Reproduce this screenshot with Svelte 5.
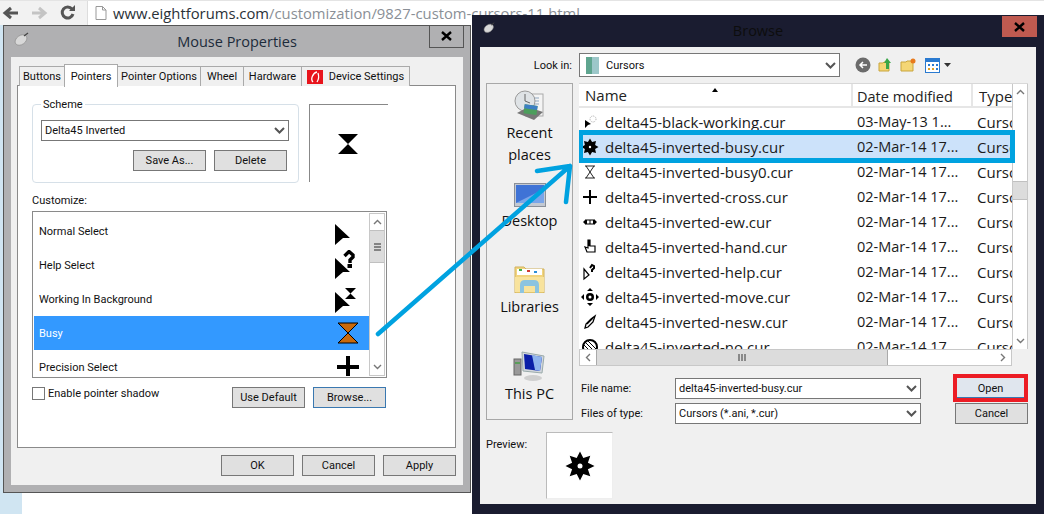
<script>
  const tabs = ['Buttons', 'Pointers', 'Pointer Options', 'Wheel', 'Hardware'];

  const pointers = [
    { name: 'Normal Select', icon: 'normal' },
    { name: 'Help Select', icon: 'help' },
    { name: 'Working In Background', icon: 'working' },
    { name: 'Busy', icon: 'busy', selected: true },
    { name: 'Precision Select', icon: 'cross' }
  ];

  const files = [
    { name: 'delta45-black-working.cur', date: '03-May-13 1...', icon: 'working' },
    { name: 'delta45-inverted-busy.cur', date: '02-Mar-14 17...', icon: 'gear', selected: true },
    { name: 'delta45-inverted-busy0.cur', date: '02-Mar-14 17...', icon: 'glass' },
    { name: 'delta45-inverted-cross.cur', date: '02-Mar-14 17...', icon: 'cross' },
    { name: 'delta45-inverted-ew.cur', date: '02-Mar-14 17...', icon: 'ew' },
    { name: 'delta45-inverted-hand.cur', date: '02-Mar-14 17...', icon: 'hand' },
    { name: 'delta45-inverted-help.cur', date: '02-Mar-14 17...', icon: 'help' },
    { name: 'delta45-inverted-move.cur', date: '02-Mar-14 17...', icon: 'move' },
    { name: 'delta45-inverted-nesw.cur', date: '02-Mar-14 17...', icon: 'nesw' },
    { name: 'delta45-inverted-no.cur', date: '02-Mar-14 17...', icon: 'no' }
  ];

  // spiky busy cursor, used in the file row and in the preview
  function gearPoints(cx, cy, outer, inner, spikes) {
    const pts = [];
    for (let i = 0; i < spikes * 2; i++) {
      const r = i % 2 ? inner : outer;
      const a = (Math.PI * i) / spikes - Math.PI / 2;
      pts.push((cx + r * Math.cos(a)).toFixed(1) + ',' + (cy + r * Math.sin(a)).toFixed(1));
    }
    return pts.join(' ');
  }
</script>

{#snippet chevron()}
  <svg class="chev" width="11" height="9" viewBox="0 0 11 9"><path d="M1 2l4.500 4.500L10 2" fill="none" stroke="#555" stroke-width="2" /></svg>
{/snippet}

{#snippet mouseIcon(w, h)}
  <svg width={w} height={h} viewBox="0 0 16 14">
    <ellipse cx="7" cy="8" rx="6.500" ry="4.500" transform="rotate(-35 7 8)" fill="#d8d8d8" stroke="#888" stroke-width=".6" />
    <path d="M10 4l4-3" stroke="#444" stroke-width="1.200" />
  </svg>
{/snippet}

{#snippet bigCursor(kind)}
  {#if kind === 'normal'}
    <svg width="24" height="30" viewBox="0 0 24 30"><polygon points="0,8 15,22 8,22 0,29" /></svg>
  {:else if kind === 'help'}
    <svg width="24" height="30" viewBox="0 0 24 30">
      <polygon points="0,8 15,22 8,22 0,29" />
      <path d="M9.500 6L14 1.500 18 5v2l-3 3v3" fill="none" stroke="#000" stroke-width="3.400" />
      <rect x="12.500" y="14" width="4.500" height="4" />
    </svg>
  {:else if kind === 'working'}
    <svg width="24" height="30" viewBox="0 0 24 30">
      <polygon points="0,8 15,22 8,22 0,29" />
      <polygon points="10,4 21,4 15.500,9.500 21,15 10,15 15.500,9.500" />
    </svg>
  {:else if kind === 'busy'}
    <svg width="24" height="24" viewBox="0 0 24 24"><polygon points="3,2 23,2 13,12 23,22 3,22 13,12" fill="#c8690c" stroke="#000" stroke-width="1" /></svg>
  {:else}
    <svg width="24" height="24" viewBox="0 0 24 24"><path d="M13 1v21M2 12h22" stroke="#000" stroke-width="4" fill="none" /></svg>
  {/if}
{/snippet}

{#snippet fileIcon(kind)}
  <svg class="ficon" width="18" height="18" viewBox="0 0 18 18">
    {#if kind === 'working'}
      <polygon points="4,7 10,11 7,12 4,15" />
      <circle cx="12" cy="6" r="3" fill="none" stroke="#aaa" stroke-width="1" stroke-dasharray="1 1" />
    {:else if kind === 'gear'}
      <polygon points={gearPoints(9, 9, 8.500, 5.500, 8)} />
      <circle cx="9" cy="9" r="1.200" fill="#fff" />
    {:else if kind === 'glass'}
      <path d="M4 3h10M4 15h10M5 3l8 12M13 3L5 15" fill="none" stroke="#222" stroke-width="1" />
    {:else if kind === 'cross'}
      <path d="M9 2v14M2 9h14" stroke="#000" stroke-width="2" />
    {:else if kind === 'ew'}
      <path d="M2 9l3-3v6zM16 9l-3-3v6z" />
      <rect x="5.500" y="7" width="7" height="4" fill="#fff" stroke="#000" />
      <path d="M9 7v4" stroke="#000" />
    {:else if kind === 'hand'}
      <path d="M7 2h2v6h5v6H6l-2-5 3 1z" fill="#fff" stroke="#000" stroke-width="1.200" />
      <rect x="7" y="2" width="2" height="6" />
    {:else if kind === 'help'}
      <path d="M3 6v10l5-4z" fill="#fff" stroke="#000" stroke-width="1.200" />
      <path d="M9 5l2-3 2 1v2l-2 2v2" fill="none" stroke="#000" stroke-width="2" />
    {:else if kind === 'move'}
      <path d="M9 0l3 3H6zM9 18l3-3H6zM0 9l3-3v6zM18 9l-3-3v6z" />
      <circle cx="9" cy="9" r="4" />
      <circle cx="9" cy="9" r="1.500" fill="#fff" />
    {:else if kind === 'nesw'}
      <path d="M14 3l-2 6-5 5-3 1 1-4 5-5z" fill="#fff" stroke="#000" stroke-width="1.300" />
      <path d="M6 11l6-6" stroke="#000" stroke-width="1.300" />
    {:else}
      <circle cx="9" cy="9" r="7" fill="#fff" stroke="#000" stroke-width="2" />
      <path d="M4 4l10 10M7 3l8 8M3 7l8 8" stroke="#000" />
    {/if}
  </svg>
{/snippet}

<div class="desktop">
  <div class="strip"></div>

  <header class="toolbar">
    <svg width="18" height="14" viewBox="0 0 18 14" class="nav"><path d="M16 7H4M9 2L3 7l6 5" fill="none" stroke="#555" stroke-width="3" /></svg>
    <svg width="18" height="14" viewBox="0 0 18 14" class="nav"><path d="M1 7h12M8 2l6 5-6 5" fill="none" stroke="#c4c4c4" stroke-width="3" /></svg>
    <svg width="16" height="16" viewBox="0 0 16 16" class="nav"><path d="M13 9a5.500 5.500 0 1 1-1-5" fill="none" stroke="#555" stroke-width="3" /><path d="M9 6h6V0z" fill="#555" /></svg>
    <div class="address">
      <svg width="12" height="14" viewBox="0 0 12 14"><path d="M1 .5h6.500L11 4v9.500H1z" fill="#fff" stroke="#999" /><path d="M7.500 .5V4H11" fill="none" stroke="#999" /></svg>
      <span class="url"><b>www.eightforums.com</b>/customization/9827-custom-cursors-11.html</span>
    </div>
  </header>

  <section class="window mouse">
    <div class="titlebar">
      <span class="appicon">{@render mouseIcon(16, 14)}</span>
      <span class="title">Mouse Properties</span>
      <span class="close">
        <svg width="11" height="10" viewBox="0 0 11 10"><path d="M1 1l9 8M10 1l-9 8" stroke="#000" stroke-width="2.400" /></svg>
      </span>
    </div>
    <div class="content">
      <nav class="tabs">
        {#each tabs as t}
          <span class="tab" class:active={t === 'Pointers'}>{t}</span>
        {/each}
        <span class="tab device">
          <svg width="16" height="14" viewBox="0 0 16 14"><rect width="16" height="14" fill="#e8141c" /><path d="M6 12C3 9 6 3 10 2M10 12c2-3 2-6 1-9" fill="none" stroke="#fff" stroke-width="1.300" /></svg>
          Device Settings
        </span>
      </nav>
      <div class="panel">
        <div class="top">
          <fieldset class="scheme">
            <legend>Scheme</legend>
            <div class="select">Delta45 Inverted {@render chevron()}</div>
            <div class="scheme-btns">
              <button>Save As...</button>
              <button>Delete</button>
            </div>
          </fieldset>
          <div class="sample">
            <svg width="20" height="20" viewBox="0 0 20 20"><polygon points="0,0 20,0 10,10 20,20 0,20 10,10" /></svg>
          </div>
        </div>
        <div class="customize">Customize:</div>
        <div class="pointer-list">
          <div class="pointer-rows">
            {#each pointers as p}
              <div class="pointer" class:selected={p.selected}>
                <span>{p.name}</span>
                <span class="cursor">{@render bigCursor(p.icon)}</span>
              </div>
            {/each}
          </div>
          <div class="vbar">
            <span class="arrow"><svg width="9" height="6" viewBox="0 0 9 6"><path d="M1 5l3.500-3.500L8 5" fill="none" stroke="#777" stroke-width="1.400" /></svg></span>
            <span class="thumb"><svg width="7" height="8" viewBox="0 0 7 8"><path d="M0 1h7M0 4h7M0 7h7" stroke="#666" stroke-width="1.400" /></svg></span>
            <span class="track"></span>
            <span class="arrow"><svg width="9" height="6" viewBox="0 0 9 6"><path d="M1 1l3.500 3.500L8 1" fill="none" stroke="#777" stroke-width="1.400" /></svg></span>
          </div>
        </div>
        <div class="pointer-foot">
          <label class="shadow"><span class="check"></span>Enable pointer shadow</label>
          <div class="foot-btns">
            <button>Use Default</button>
            <button class="focus">Browse...</button>
          </div>
        </div>
      </div>
      <div class="dialog-btns">
        <button>OK</button>
        <button>Cancel</button>
        <button>Apply</button>
      </div>
    </div>
  </section>

  <section class="window browse">
    <div class="titlebar">
      <span class="appicon">{@render mouseIcon(13, 11)}</span>
      <span class="title">Browse</span>
      <span class="close red">
        <svg width="11" height="10" viewBox="0 0 11 10"><path d="M1 1l9 8M10 1l-9 8" stroke="#000" stroke-width="2.400" /></svg>
      </span>
    </div>
    <div class="content">
      <div class="lookin">
        <span class="lookin-label">Look in:</span>
        <div class="select wide">
          <svg width="13" height="17" viewBox="0 0 13 17"><rect width="6" height="17" fill="#5fa58f" /><rect x="6" width="7" height="17" fill="#9cc7c9" /></svg>
          <span class="grow">Cursors</span>
          {@render chevron()}
        </div>
        <div class="tools">
          <svg width="16" height="16" viewBox="0 0 16 16"><circle cx="8" cy="8" r="7.500" fill="#6b6b6b" /><path d="M12 8H5M8 5L5 8l3 3" fill="none" stroke="#fff" stroke-width="1.500" /></svg>
          <svg width="15" height="16" viewBox="0 0 15 16"><path d="M1 6h4l1-1h5v9H1z" fill="#f4d675" stroke="#c9a53c" /><path d="M9 1l4 5h-2v6H8V6H6z" fill="#3aa648" /></svg>
          <svg width="16" height="14" viewBox="0 0 16 14"><path d="M1 4h5l1-1h6v10H1z" fill="#f4d675" stroke="#c9a53c" /><circle cx="13" cy="3" r="2.500" fill="#e87a1d" /></svg>
          <span class="views">
            <svg width="15" height="15" viewBox="0 0 15 15"><rect x=".5" y=".5" width="14" height="14" fill="#fff" stroke="#2a7ad0" /><rect x="1" y="1" width="13" height="3" fill="#2a7ad0" /><path d="M3 6h2v2H3zM7 6h2v2H7zM11 6h2v2h-2z" fill="#2a7ad0" /><path d="M3 10h2v2H3zM7 10h2v2H7z" fill="#e2a020" /><path d="M11 10h2v2h-2z" fill="#2a7ad0" /></svg>
            <svg width="7" height="4" viewBox="0 0 7 4"><path d="M0 0h7L3.500 4z" fill="#333" /></svg>
          </span>
        </div>
      </div>

      <div class="main">
        <aside class="places">
          <div class="place recent">
            <svg width="32" height="32" viewBox="0 0 32 32">
              <rect x="12" y="4" width="17" height="22" fill="#f4f4f4" stroke="#aaa" />
              <path d="M15 8h10M15 11h10M15 14h10" stroke="#8fa7c0" />
              <circle cx="11" cy="11" r="10" fill="#dfe3e6" stroke="#9a9a9a" />
              <path d="M11 4v7l5 2" fill="none" stroke="#666" />
              <path d="M3 23l11-6 15 5-9 8z" fill="#777" />
              <rect x="10" y="15" width="13" height="9" fill="#4c9e5c" transform="rotate(8 16 20)" />
              <rect x="10" y="15" width="13" height="4" fill="#3c7fc4" transform="rotate(8 16 20)" />
            </svg>
            <span>Recent<br />places</span>
          </div>
          <div class="place desktop-place">
            <svg width="32" height="24" viewBox="0 0 32 24">
              <rect x=".5" y=".5" width="31" height="23" fill="#c3c9d2" stroke="#8a8f98" />
              <rect x="2" y="2" width="28" height="18" fill="#3f73d6" />
              <path d="M2 20L30 6v14z" fill="#7aa5e8" />
            </svg>
            <span>Desktop</span>
          </div>
          <div class="place libraries">
            <svg width="31" height="28" viewBox="0 0 31 28">
              <path d="M1 4V2h9l2 2h18v24H1z" fill="#f2d57f" stroke="#d1b25e" />
              <rect x="3" y="4" width="25" height="6" fill="#fff" />
              <rect x="5" y="4" width="3" height="2" fill="#3fae4a" />
              <rect x="13" y="5" width="3" height="2" fill="#d03a30" />
              <rect x="20" y="6" width="3" height="2" fill="#2c8fd8" />
              <path d="M1 12h29v15H1z" fill="#f8e39d" />
              <path d="M6 28v-8q0-5 5-5h9q5 0 5 5v8h-4v-7H10v7z" fill="#8cc4e0" />
            </svg>
            <span>Libraries</span>
          </div>
          <div class="place pc">
            <svg width="32" height="32" viewBox="0 0 32 32">
              <path d="M9 2l22 4-2 17-19-2z" fill="#d4d8dd" stroke="#9aa" />
              <path d="M11 4l18 3-2 14-15-2z" fill="#0b1fa8" />
              <path d="M19 5l10 2-2 14-5-1z" fill="#8fb4ee" />
              <rect x="1" y="9" width="7" height="16" fill="#999" stroke="#666" />
              <rect x="2" y="12" width="5" height="2" fill="#5a9e5a" />
              <ellipse cx="20" cy="28" rx="9" ry="3" fill="#cfcfcf" />
            </svg>
            <span>This PC</span>
          </div>
        </aside>

        <div class="right">
          <div class="listbox">
            <div class="listing">
              <div class="head">
                <span class="sort"></span>
                <span class="col-name">Name</span>
                <span class="col-date">Date modified</span>
                <span class="col-type">Type</span>
              </div>
              {#each files as f}
                <div class="file" class:selected={f.selected}>
                  <span class="col-name">{@render fileIcon(f.icon)}{f.name}</span>
                  <span class="col-date">{f.date}</span>
                  <span class="col-type">Cursor</span>
                </div>
              {/each}
            </div>
            <div class="vbar big">
              <span class="arrow"><svg width="9" height="6" viewBox="0 0 9 6"><path d="M1 5l3.500-3.500L8 5" fill="none" stroke="#777" stroke-width="1.400" /></svg></span>
              <span class="lead"></span>
              <span class="thumb"></span>
              <span class="track"></span>
              <span class="arrow"><svg width="9" height="6" viewBox="0 0 9 6"><path d="M1 1l3.500 3.500L8 1" fill="none" stroke="#777" stroke-width="1.400" /></svg></span>
            </div>
          </div>
          <div class="hbar">
            <span class="harrow"><svg width="6" height="9" viewBox="0 0 6 9"><path d="M5 1L1.500 4.500 5 8" fill="none" stroke="#777" stroke-width="1.400" /></svg></span>
            <span class="hthumb"><svg width="8" height="7" viewBox="0 0 8 7"><path d="M1 0v7M4 0v7M7 0v7" stroke="#666" stroke-width="1.400" /></svg></span>
            <span class="htrack"></span>
            <span class="harrow"><svg width="6" height="9" viewBox="0 0 6 9"><path d="M1 1l3.500 3.500L1 8" fill="none" stroke="#777" stroke-width="1.400" /></svg></span>
          </div>
          <div class="form">
            <span class="flabel">File name:</span>
            <div class="select field">delta45-inverted-busy.cur {@render chevron()}</div>
            <button class="open">Open</button>
            <span class="flabel">Files of type:</span>
            <div class="select field">Cursors (*.ani, *.cur) {@render chevron()}</div>
            <button class="cancel">Cancel</button>
          </div>
        </div>
      </div>

      <div class="preview">
        <span class="preview-label">Preview:</span>
        <div class="preview-box">
          <svg width="30" height="30" viewBox="0 0 30 30">
            <polygon points={gearPoints(15, 15, 14.500, 8.500, 8)} />
            <circle cx="15" cy="15" r="2.500" fill="#fff" />
          </svg>
        </div>
      </div>
    </div>
  </section>

  <!-- annotations drawn on top of the screenshot -->
  <div class="mark-row"></div>
  <svg class="marker" width="1044" height="514" viewBox="0 0 1044 514">
    <path d="M378 334L570 166M537 171L570 166L566 202" fill="none" stroke="#00a2e0" stroke-width="4.500" stroke-linecap="round" stroke-linejoin="round" />
  </svg>
</div>

<style>
  :global(body) {
    margin: 0;
    background: #fff;
  }

  * {
    box-sizing: border-box;
  }

  .desktop {
    position: relative;
    width: 1044px;
    height: 514px;
    overflow: hidden;
    background: #fff;
    font-family: Roboto, "Noto Sans", sans-serif;
    font-size: 11px;
    color: #111;
  }

  .strip {
    position: absolute;
    left: 0;
    top: 25px;
    width: 22px;
    height: 489px;
    background: #d0e5f2;
  }

  .toolbar {
    display: flex;
    align-items: center;
    height: 25px;
    padding-left: 2px;
    background: #f2f2f2;
    border-top: 1px solid #e4e4e4;
  }

  .nav {
    margin-right: 11px;
    flex: none;
  }

  .address {
    display: flex;
    align-items: center;
    gap: 6px;
    padding-left: 7px;
    flex: 1;
    height: 24px;
    background: #fff;
    border-left: 1px solid #ddd;
    white-space: nowrap;
  }

  .url {
    font-family: "Open Sans", sans-serif;
    font-size: 14.8px;
    color: #8a8f96;
  }

  .url b {
    font-weight: 400;
    color: #2a3138;
  }

  .window {
    position: absolute;
    display: flex;
    flex-direction: column;
    border: 1px solid #555;
  }

  .mouse {
    left: 3px;
    top: 25px;
    width: 468px;
    height: 468px;
    padding: 0 7px 7px;
    background: #b0b0b2;
  }

  .browse {
    left: 472px;
    top: 15px;
    width: 572px;
    height: 499px;
    padding: 0 7px 9px;
    background: #1a1c30;
    border-color: #1a1c30;
  }

  .titlebar {
    display: flex;
    align-items: center;
    justify-content: center;
    position: relative;
    height: 31px;
    flex: none;
  }

  .title {
    font-family: "Open Sans", sans-serif;
    font-size: 14.5px;
    color: #1c2b3a;
  }

  .browse .title {
    color: #0d0d0d;
    margin-top: -2px;
  }

  .appicon {
    position: absolute;
    left: 3px;
    top: 6px;
  }

  .close {
    position: absolute;
    right: -1px;
    top: -1px;
    width: 35px;
    height: 23px;
    display: flex;
    align-items: center;
    justify-content: center;
    border: 1px solid #555;
    border-top: 0;
  }

  .close.red {
    top: 0;
    height: 21px;
    background: #bf5a50;
    border: 0;
  }

  .content {
    flex: 1;
    background: #f0f0f0;
  }

  .mouse .content {
    padding: 7px 6px 0;
  }

  .tabs {
    display: flex;
    align-items: flex-end;
    margin-left: 2px;
    height: 21px;
    position: relative;
    top: 1px;
  }

  .tab {
    display: flex;
    align-items: center;
    justify-content: center;
    gap: 6px;
    width: 46px;
    height: 20px;
    background: #f0f0f0;
    border: 1px solid #aaa;
    border-bottom: 0;
    border-left: 0;
    line-height: 1;
  }

  .tab:first-child {
    border-left: 1px solid #aaa;
  }

  .tab.active {
    position: relative;
    z-index: 1;
    width: 54px;
    height: 23px;
    margin-bottom: -1px;
    margin-left: -1px;
    background: #fff;
    border-left: 1px solid #aaa;
  }

  .tab:nth-child(3) {
    width: 83px;
  }

  .tab:nth-child(4) {
    width: 43px;
  }

  .tab:nth-child(5) {
    width: 58px;
  }

  .tab.device {
    width: 108px;
  }

  .panel {
    width: 439px;
    height: 363px;
    padding: 0 14px;
    background: #fff;
    border: 1px solid #8a8a8a;
  }

  .top {
    display: flex;
    align-items: flex-start;
    padding-top: 11px;
  }

  .scheme {
    width: 266px;
    height: 86px;
    margin: 0;
    padding: 0 9px;
    border: 1px solid #d6e0e8;
    border-radius: 4px;
  }

  legend {
    padding: 0 2px;
    margin-left: -1px;
    line-height: 15px;
  }

  .select {
    display: flex;
    align-items: center;
    justify-content: space-between;
    height: 21px;
    padding: 0 3px;
    background: #fff;
    border: 1px solid #777;
    white-space: nowrap;
  }

  .scheme .select {
    width: 248px;
    margin-top: 8px;
    margin-left: -1px;
  }

  .chev {
    flex: none;
  }

  .scheme-btns {
    display: flex;
    justify-content: flex-end;
    gap: 8px;
    margin-top: 9px;
    margin-right: 2px;
  }

  button {
    width: 73px;
    height: 21px;
    padding: 0;
    background: #e0e0e0;
    border: 1px solid #777;
    border-radius: 0;
    font: inherit;
    color: inherit;
  }

  .sample {
    display: flex;
    align-items: center;
    justify-content: center;
    width: 79px;
    height: 78px;
    margin: 7px 0 0 10px;
    padding-right: 2px;
    background: #fff;
    border-top: 1px solid #888;
    border-left: 1px solid #888;
  }

  .customize {
    margin-top: 10px;
    line-height: 15px;
    height: 18px;
  }

  .pointer-list {
    display: flex;
    width: 355px;
    height: 167px;
    padding: 1px;
    border: 1px solid #8a8a8a;
  }

  .pointer-rows {
    flex: 1;
    overflow: hidden;
  }

  .pointer {
    display: flex;
    align-items: center;
    justify-content: space-between;
    height: 34px;
    padding-left: 5px;
  }

  .pointer:first-child {
    margin-top: 1px;
  }

  .pointer.selected {
    background: #3399ff;
    color: #fff;
  }

  .cursor {
    display: flex;
    margin-right: 10px;
    width: 24px;
    justify-content: center;
  }

  .vbar {
    display: flex;
    flex-direction: column;
    width: 16px;
    flex: none;
    border: 1px solid #c8c8c8;
    background: #fff;
  }

  .arrow {
    display: flex;
    align-items: center;
    justify-content: center;
    height: 16px;
    flex: none;
  }

  .thumb {
    display: flex;
    align-items: center;
    justify-content: center;
    height: 33px;
    flex: none;
    background: #dcdcdc;
    border-top: 1px solid #c0c0c0;
    border-bottom: 1px solid #c0c0c0;
  }

  .track {
    flex: 1;
  }

  .pointer-foot {
    display: flex;
    justify-content: space-between;
    width: 354px;
    margin-top: 9px;
  }

  .shadow {
    display: flex;
    align-items: center;
    gap: 3px;
    height: 13px;
  }

  .check {
    width: 13px;
    height: 13px;
    background: #fff;
    border: 1px solid #777;
  }

  .foot-btns {
    display: flex;
    gap: 8px;
  }

  .focus {
    border-color: #3a78b0;
  }

  .dialog-btns {
    display: flex;
    justify-content: flex-end;
    gap: 8px;
    width: 439px;
    margin-top: 7px;
  }

  .browse .content {
    padding: 6px 8px 0 6px;
  }

  .lookin {
    display: flex;
    align-items: center;
    height: 24px;
  }

  .lookin-label {
    width: 87px;
    padding-right: 1px;
    text-align: right;
  }

  .select.wide {
    justify-content: flex-start;
    gap: 7px;
    width: 261px;
    height: 24px;
    margin-left: 6px;
    padding-left: 6px;
  }

  .grow {
    flex: 1;
  }

  .tools {
    display: flex;
    align-items: center;
    gap: 7px;
    margin-left: 15px;
  }

  .views {
    display: flex;
    align-items: center;
    gap: 4px;
    margin-left: 2px;
  }

  .main {
    display: flex;
    gap: 6px;
    margin-top: 6px;
    height: 337px;
  }

  .places {
    display: flex;
    flex-direction: column;
    align-items: center;
    width: 87px;
    padding-top: 6px;
    border: 1px solid #a8a8a8;
    font-family: "Open Sans", sans-serif;
    font-size: 14.5px;
    line-height: 22px;
    text-align: center;
  }

  .place svg {
    display: block;
    margin: 0 auto 1px;
  }

  .place {
    flex: none;
  }

  .recent svg {
    margin-bottom: 0;
  }

  .desktop-place {
    margin-top: 17px;
  }

  .desktop-place svg,
  .libraries svg {
    margin-bottom: 3px;
  }

  .libraries {
    margin-top: 33px;
  }

  .pc {
    margin-top: 32px;
  }

  .right {
    width: 449px;
  }

  .listbox {
    display: flex;
    height: 266px;
    background: #fff;
    border-top: 1px solid #d8d8d8;
  }

  .listing {
    width: 433px;
    overflow: hidden;
    font-family: "Open Sans", sans-serif;
    font-size: 15px;
  }

  .head {
    position: relative;
    display: flex;
    height: 24px;
    line-height: 25px;
    border-bottom: 2px solid #e6e6e6;
    color: #222;
  }

  .head span + span {
    border-left: 2px solid #e6e6e6;
  }

  .sort {
    position: absolute;
    left: 133px;
    top: 4px;
    width: 0;
    height: 0;
    border: 3px solid transparent;
    border-bottom: 4px solid #000;
    border-top: 0;
  }

  .col-name {
    display: flex;
    align-items: center;
    width: 272px;
    flex: none;
    padding-left: 5px;
  }

  .col-date {
    width: 120px;
    flex: none;
    padding-left: 6px;
    font-size: 14.5px;
    white-space: nowrap;
  }

  .head .col-date {
    padding-left: 4px;
  }

  .col-type {
    width: 41px;
    flex: none;
    padding-left: 6px;
    white-space: nowrap;
    overflow: hidden;
  }

  .head .col-name {
    padding-left: 6px;
    border-left: 0;
  }

  .file {
    display: flex;
    align-items: center;
    height: 25px;
    white-space: nowrap;
    color: #1a1a1a;
  }

  .file:nth-child(2) {
    margin-top: 1px;
  }

  .file.selected {
    background: #cce2fa;
  }

  .file .col-name {
    padding-left: 2px;
  }

  .ficon {
    flex: none;
    margin-right: 6px;
  }

  .vbar.big {
    border-top: 0;
    border-bottom: 0;
    height: 265px;
  }

  .vbar.big .thumb {
    height: 19px;
  }

  .lead {
    flex: none;
    height: 81px;
  }

  .hbar {
    display: flex;
    width: 433px;
    height: 17px;
    background: #fff;
    border: 1px solid #c8c8c8;
  }

  .harrow {
    display: flex;
    align-items: center;
    justify-content: center;
    width: 16px;
    flex: none;
  }

  .hthumb {
    display: flex;
    align-items: center;
    justify-content: center;
    width: 292px;
    flex: none;
    background: #dcdcdc;
    border-left: 1px solid #aaa;
    border-right: 1px solid #aaa;
  }

  .htrack {
    flex: 1;
  }

  .form {
    display: grid;
    grid-template-columns: 94px 246px 108px;
    grid-template-rows: 28px 20px;
    row-gap: 1px;
    align-items: center;
    margin-top: 8px;
    padding-left: 2px;
  }

  .form .field {
    height: 21px;
  }

  .flabel {
    white-space: nowrap;
  }

  .open,
  .cancel {
    justify-self: end;
  }

  .open {
    width: 75px;
    height: 28px;
    margin-right: 1px;
    background: #e0e6ee;
    border: 4px solid #ec1c24;
    box-shadow: inset 0 -1px 0 #3a78b0;
  }

  .cancel {
    margin-right: 1px;
  }

  .preview {
    display: flex;
    align-items: flex-start;
    margin-top: 12px;
    line-height: 26px;
  }

  .preview-label {
    width: 60px;
  }

  .preview-box {
    display: flex;
    align-items: center;
    justify-content: center;
    width: 67px;
    height: 67px;
    background: #fff;
    border: 1px solid #bbb;
    border-bottom-color: #eee;
    border-right-color: #eee;
  }

  .mark-row {
    position: absolute;
    left: 579px;
    top: 130px;
    width: 436px;
    height: 33px;
    border: 5px solid #00a2e0;
    border-left-width: 4px;
  }

  .marker {
    position: absolute;
    left: 0;
    top: 0;
    pointer-events: none;
  }
</style>
